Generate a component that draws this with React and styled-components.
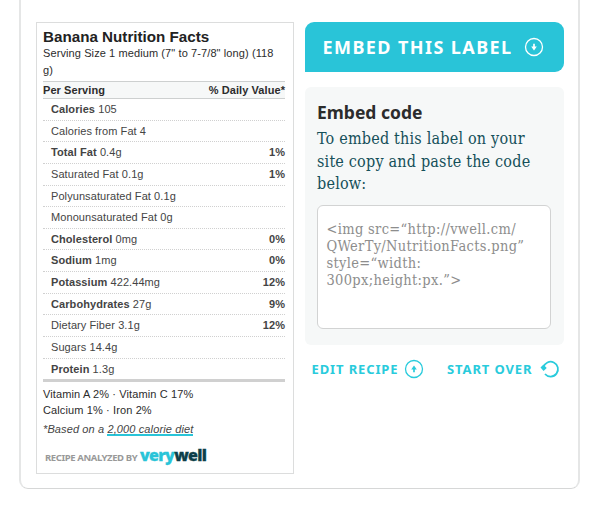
import React from "react";
import styled, { createGlobalStyle } from "styled-components";

const Global = createGlobalStyle`
  * { box-sizing: border-box; }
  body { margin: 0; background: #fff; overflow: hidden; }
`;

const Frame = styled.main`
  width: 561px;
  height: 489px;
  margin-left: 19px;
  padding: 22px 14px 0 15px;
  border: 2px solid #e5e6e6;
  border-top: 0;
  border-bottom: 1px solid #d6d7d7;
  border-radius: 0 0 9px 9px;
  display: flex;
  align-items: flex-start;
  justify-content: space-between;
`;

const Label = styled.section`
  width: 258px;
  height: 452px;
  padding: 5px 8px 0 6px;
  border: 1px solid #dcdddd;
  font-family: "Liberation Sans", Arial, sans-serif;
  font-size: 11px;
  letter-spacing: 0.08px;
  color: #2c2c2c;
  white-space: nowrap;
`;

const Title = styled.h1`
  margin: 0;
  height: 17px;
  font-size: 15.2px;
  line-height: 17px;
  letter-spacing: 0;
  color: #222;
`;

const Serving = styled.p`
  margin: 0 0 3px;
  line-height: 16.5px;
  letter-spacing: 0.1px;
`;

const Head = styled.div`
  display: flex;
  justify-content: space-between;
  height: 18px;
  border: solid #cdd0d0;
  border-width: 1px 0;
  background: #f6f8f8;
  font-weight: bold;
  line-height: 17px;
`;

const Row = styled.div`
  display: flex;
  justify-content: space-between;
  height: 21.63px;
  padding-left: 8px;
  border-bottom: 1px dotted #d0d0d0;
  line-height: 21px;
  color: #444;
  &:last-child { border-bottom: 0; }
`;

const Rows = styled.div`
  height: 283px;
  border-bottom: 3px solid #d0d0d0;
`;

const Vitamins = styled.p`
  margin: 4px 0 0;
  line-height: 16px;
  letter-spacing: 0.12px;
`;

const Note = styled.p`
  margin: 3px 0 0;
  line-height: 16px;
  font-style: italic;
  letter-spacing: 0.12px;
  color: #444;
`;

const DietLink = styled.span`
  display: inline-block;
  height: 15px;
  line-height: 16px;
  vertical-align: top;
  border-bottom: 2px solid #29c4d8;
`;

const Credit = styled.div`
  display: flex;
  align-items: baseline;
  margin: 8px 0 0 2px;
  font-family: "Noto Sans", sans-serif;
  font-size: 9.5px;
  font-weight: 700;
  line-height: 20px;
  color: #999;
`;

const CreditText = styled.span`
  width: 95px;
  letter-spacing: -0.4px;
`;

const Brand = styled.span`
  font-family: "Open Sans", sans-serif;
  font-size: 16px;
  font-weight: 800;
  letter-spacing: -0.7px;
  -webkit-text-stroke: 0.3px currentColor;
  color: ${(p) => (p.$dark ? "#0d3f49" : "#29c4d8")};
`;

const Side = styled.section`
  width: 259px;
  font-family: "Noto Sans", sans-serif;
`;

const EmbedButton = styled.button`
  display: flex;
  align-items: center;
  width: 100%;
  height: 50px;
  padding: 0 0 1px 17.5px;
  border: 0;
  border-radius: 9px 9px 9px 0;
  background: #29c4d8;
  color: #fff;
  font: 700 18px/50px "Noto Sans", sans-serif;
  letter-spacing: 1.42px;
  text-align: left;
  white-space: nowrap;
`;

const ButtonText = styled.span`
  width: ${(p) => p.$width}px;
`;

const Panel = styled.div`
  height: 258px;
  margin-top: 15px;
  padding: 13px 13px 0 12px;
  border-radius: 6px;
  background: #f6f8f8;
`;

const PanelTitle = styled.h2`
  margin: 0;
  font-size: 17.5px;
  line-height: 24px;
  color: #2c2c2c;
`;

const PanelCopy = styled.p`
  margin: 4px 0 0;
  font: 16px/22.5px "DejaVu Serif Condensed", "DejaVu Serif", serif;
  letter-spacing: 0.2px;
  color: #15505a;
  white-space: nowrap;
`;

const CodeBox = styled.div`
  width: 234px;
  height: 124px;
  margin-top: 9px;
  padding: 15px 8.5px;
  border: 1px solid #d2d3d3;
  border-radius: 6px;
  background: #fff;
  font: 14.5px/17px "DejaVu Serif Condensed", "DejaVu Serif", serif;
  letter-spacing: 0.32px;
  color: #8d8d8d;
  white-space: nowrap;
`;

const Actions = styled.div`
  display: flex;
  justify-content: space-between;
  height: 20px;
  margin: 14px 4px 0 6.5px;
`;

const Action = styled.button`
  display: flex;
  align-items: center;
  padding: 0;
  border: 0;
  background: none;
  color: #29cbdc;
  font: 700 13px/20px "Noto Sans", sans-serif;
  letter-spacing: 0.88px;
  text-align: left;
  white-space: nowrap;
`;

function CircleArrow({ up }) {
  return (
    <svg width="20" height="20" viewBox="0 0 20 20" fill="none" stroke="currentColor">
      <circle cx="10" cy="10" r="8.5" strokeWidth="1.3" />
      <g transform={up ? "rotate(180 10 10)" : undefined}>
        <path d="M10 6.8v4" strokeWidth="1.7" />
        <path d="M7.2 9.6h5.6L10 13.5z" fill="currentColor" stroke="none" />
      </g>
    </svg>
  );
}

function RestartIcon() {
  return (
    <svg width="20" height="20" viewBox="0 0 20 20" fill="none" stroke="currentColor">
      <path d="M3.4 8.4a7.4 7.4 0 1 1 1.6 6.6" strokeWidth="1.8" />
      <path d="M0.5 8.4l2.9-3 3.3 3.6-3.1 3z" fill="currentColor" stroke="none" />
    </svg>
  );
}

const facts = [
  ["Calories", "105"],
  ["", "Calories from Fat 4"],
  ["Total Fat", "0.4g", "1%"],
  ["", "Saturated Fat 0.1g", "1%"],
  ["", "Polyunsaturated Fat 0.1g"],
  ["", "Monounsaturated Fat 0g"],
  ["Cholesterol", "0mg", "0%"],
  ["Sodium", "1mg", "0%"],
  ["Potassium", "422.44mg", "12%"],
  ["Carbohydrates", "27g", "9%"],
  ["", "Dietary Fiber 3.1g", "12%"],
  ["", "Sugars 14.4g"],
  ["Protein", "1.3g"],
];

export default function App() {
  return (
    <>
      <Global />
      <Frame>
        <Label>
          <Title>Banana Nutrition Facts</Title>
          <Serving>
            Serving Size 1 medium (7" to 7-7/8" long) (118<br />g)
          </Serving>
          <Head><span>Per Serving</span><span>% Daily Value*</span></Head>
          <Rows>
            {facts.map(([name, value, daily]) => (
              <Row key={name + value}>
                <span>{name && <b>{name} </b>}{value}</span>
                {daily && <b>{daily}</b>}
              </Row>
            ))}
          </Rows>
          <Vitamins>
            Vitamin A 2% · Vitamin C 17%<br />Calcium 1% · Iron 2%
          </Vitamins>
          <Note>*Based on a <DietLink>2,000 calorie diet</DietLink></Note>
          <Credit>
            <CreditText>RECIPE ANALYZED BY</CreditText>
            <Brand>very</Brand><Brand $dark>well</Brand>
          </Credit>
        </Label>
        <Side>
          <EmbedButton>
            <ButtonText $width={201}>EMBED THIS LABEL</ButtonText>
            <CircleArrow />
          </EmbedButton>
          <Panel>
            <PanelTitle>Embed code</PanelTitle>
            <PanelCopy>
              To embed this label on your<br />site copy and paste the code<br />below:
            </PanelCopy>
            <CodeBox>
              &lt;img src=“http://vwell.cm/<br />QWerTy/NutritionFacts.png”<br />style=“width:<br />300px;height:px.”&gt;
            </CodeBox>
          </Panel>
          <Actions>
            <Action><ButtonText $width={92}>EDIT RECIPE</ButtonText><CircleArrow up /></Action>
            <Action><ButtonText $width={93}>START OVER</ButtonText><RestartIcon /></Action>
          </Actions>
        </Side>
      </Frame>
    </>
  );
}
